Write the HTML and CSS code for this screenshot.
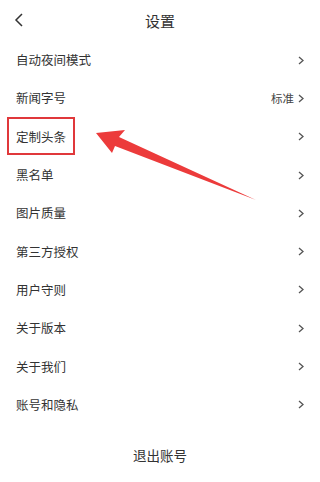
FILE: index.html
```html
<!DOCTYPE html>
<html lang="zh-CN">
<head>
  <meta charset="UTF-8">
  <title>设置</title>
  <link rel="stylesheet" href="styles.css">
</head>
<body>
  <div class="page">
    <div class="header">
      <svg class="back" width="10" height="14" viewBox="0 0 10 14">
        <path d="M8 1 L2 7 L8 13" fill="none" stroke="#333" stroke-width="1.5"/>
      </svg>
      <h1>设置</h1>
    </div>

    <ul class="list">
      <li class="row"><span class="label">自动夜间模式</span><svg class="arrow" viewBox="0 0 6 9"><path d="M1 1 L5 4.5 L1 8"/></svg></li>
      <li class="row"><span class="label">新闻字号</span><span class="value">标准</span><svg class="arrow" viewBox="0 0 6 9"><path d="M1 1 L5 4.5 L1 8"/></svg></li>
      <li class="row"><span class="label highlight">定制头条</span><svg class="arrow" viewBox="0 0 6 9"><path d="M1 1 L5 4.5 L1 8"/></svg></li>
      <li class="row"><span class="label">黑名单</span><svg class="arrow" viewBox="0 0 6 9"><path d="M1 1 L5 4.5 L1 8"/></svg></li>
      <li class="row"><span class="label">图片质量</span><svg class="arrow" viewBox="0 0 6 9"><path d="M1 1 L5 4.5 L1 8"/></svg></li>
      <li class="row"><span class="label">第三方授权</span><svg class="arrow" viewBox="0 0 6 9"><path d="M1 1 L5 4.5 L1 8"/></svg></li>
      <li class="row"><span class="label">用户守则</span><svg class="arrow" viewBox="0 0 6 9"><path d="M1 1 L5 4.5 L1 8"/></svg></li>
      <li class="row"><span class="label">关于版本</span><svg class="arrow" viewBox="0 0 6 9"><path d="M1 1 L5 4.5 L1 8"/></svg></li>
      <li class="row"><span class="label">关于我们</span><svg class="arrow" viewBox="0 0 6 9"><path d="M1 1 L5 4.5 L1 8"/></svg></li>
      <li class="row"><span class="label">账号和隐私</span><svg class="arrow" viewBox="0 0 6 9"><path d="M1 1 L5 4.5 L1 8"/></svg></li>
    </ul>

    <div class="logout">退出账号</div>

    <!-- red annotation arrow drawn over the list -->
    <svg class="pointer" width="320" height="482" viewBox="0 0 320 482">
      <polygon points="96,133 125,130 119,137 256,200 115,146 112,153" fill="#ec3b3b"/>
    </svg>
  </div>
</body>
</html>
```

FILE: styles.css
```css
* {
  box-sizing: border-box;
}

body {
  margin: 0;
  background: #fff;
  font-family: "Noto Sans CJK SC", "Noto Sans", sans-serif;
  color: #333;
}

.page {
  position: relative;
  width: 320px;
  height: 482px;
  overflow: hidden;
}

.header {
  display: flex;
  align-items: center;
  justify-content: center;
  height: 40px;
  position: relative;
}

.header h1 {
  margin: 0;
  font-size: 15px;
  font-weight: normal;
  color: #333;
}

.back {
  position: absolute;
  left: 14px;
  top: 13px;
}

.list {
  list-style: none;
  margin: 1px 0 0;
  padding: 0;
}

.row {
  display: flex;
  align-items: center;
  height: 38.3px;
  padding: 0 16px;
}

.label {
  flex: 1;
  font-size: 12.5px;
  line-height: 16px;
}

.highlight {
  flex: none;
  position: relative;
  margin-right: auto;
}

.highlight::after {
  content: "";
  position: absolute;
  left: -9px;
  right: -9px;
  top: -12px;
  bottom: -10px;
  border: 2.5px solid #e0383b;
}

.value {
  font-size: 11.5px;
  color: #444;
  margin-right: 4px;
}

.arrow {
  width: 6px;
  height: 9px;
  fill: none;
  stroke: #555;
  stroke-width: 1.3;
}

.logout {
  height: 62px;
  display: flex;
  align-items: center;
  justify-content: center;
  font-size: 13.5px;
  color: #333;
}

.pointer {
  position: absolute;
  left: 0;
  top: 0;
  pointer-events: none;
}
```
